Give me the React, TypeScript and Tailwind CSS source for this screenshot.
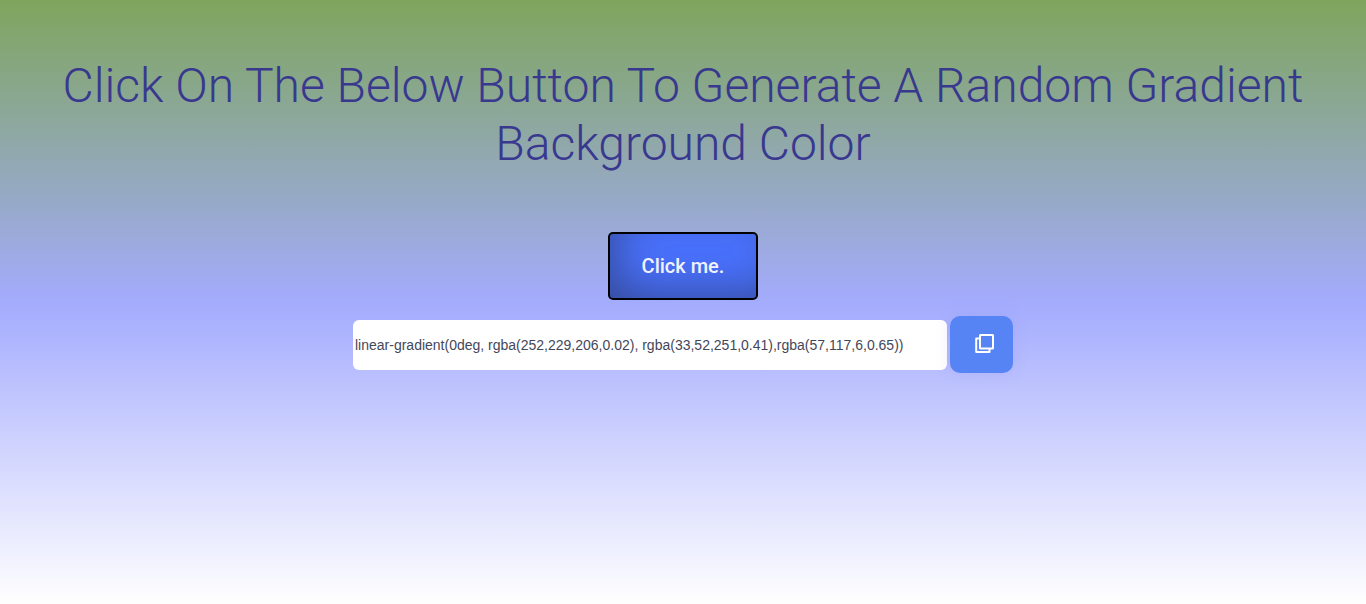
import { useState } from "react";

const START =
  "linear-gradient(0deg, rgba(252,229,206,0.02), rgba(33,52,251,0.41),rgba(57,117,6,0.65))";

const channel = () => Math.floor(Math.random() * 256);
const color = () => `rgba(${channel()},${channel()},${channel()},${Math.random().toFixed(2)})`;

function CopyIcon() {
  return (
    <svg width="20" height="20" viewBox="0 0 20 20" fill="none" stroke="currentColor" strokeWidth="2" strokeLinejoin="round" strokeLinecap="round" aria-hidden="true">
      <rect x="5" y="1" width="13" height="13.5" rx="0.5" />
      <path d="M4.5 4.5H1.2V18H14.5V15" />
    </svg>
  );
}

export default function App() {
  const [gradient, setGradient] = useState(START);

  const generate = () =>
    setGradient(`linear-gradient(${Math.floor(Math.random() * 360)}deg, ${color()}, ${color()},${color()})`);

  return (
    <main className="flex min-h-screen flex-col items-center px-8 pt-[57px]" style={{ backgroundImage: gradient }}>
      <h1 className="text-center font-['Roboto',sans-serif] text-5xl leading-[58px] font-[350] text-[#38388f]">
        Click On The Below Button To Generate A Random Gradient Background Color
      </h1>
      <button
        type="button"
        onClick={generate}
        className="mt-[59px] rounded-[5px] border-2 border-black bg-[#4a72ff] px-8 py-5 font-['Roboto',sans-serif] text-xl leading-6 font-medium text-[#f0f3ff] shadow-[inset_16px_-16px_48px_-12px_rgba(40,50,90,0.65)]"
      >
        Click me.
      </button>
      <div className="mt-4 flex w-full max-w-[660px] items-center gap-[3px]">
        <input
          type="text"
          readOnly
          aria-label="Gradient CSS"
          value={gradient}
          className="h-[50px] min-w-0 flex-1 rounded-md bg-white px-[2px] font-['Liberation_Sans',sans-serif] text-sm text-[#44475a] outline-none"
        />
        <button
          type="button"
          aria-label="Copy gradient"
          onClick={() => navigator.clipboard?.writeText(gradient)}
          className="flex h-[57px] w-[63px] items-center justify-center rounded-[10px] bg-[#5784f5] pb-[2px] pl-[6px] text-white shadow-[0_0_14px_rgba(143,145,245,0.25)]"
        >
          <CopyIcon />
        </button>
      </div>
    </main>
  );
}
